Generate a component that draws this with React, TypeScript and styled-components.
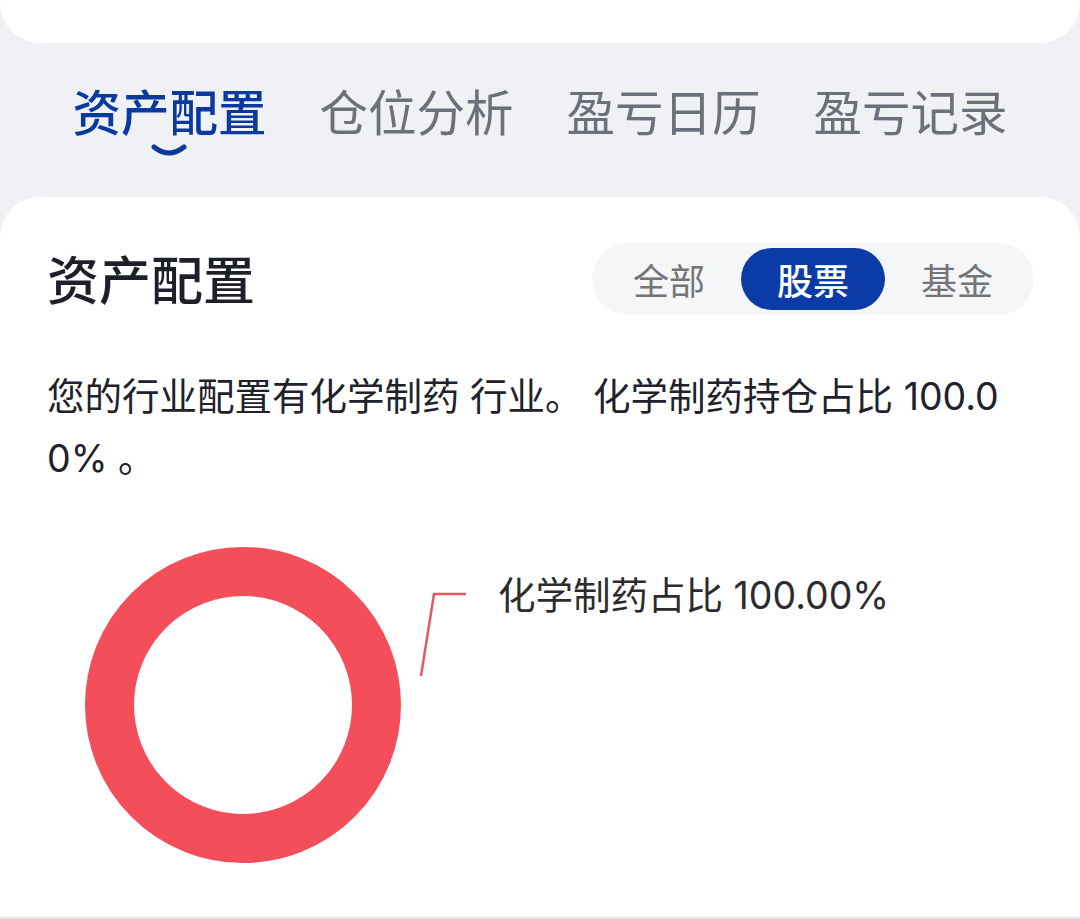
import { styled, createGlobalStyle } from 'styled-components';

const GlobalStyle = createGlobalStyle`
  html, body {
    margin: 0;
    padding: 0;
    background-color: #eff1f5;
  }
  body {
    font-family: "Noto Sans CJK SC", "Noto Sans", sans-serif;
    width: 1080px;
    height: 919px;
    overflow: hidden;
  }
  * {
    box-sizing: border-box;
  }
`;

const Page = styled.div`
  display: flex;
  flex-direction: column;
  height: 919px;
`;

const TopCard = styled.div`
  height: 43px;
  background-color: #ffffff;
  border-radius: 0 0 40px 40px;
`;

const TabBar = styled.nav`
  height: 154px;
  display: flex;
  justify-content: center;
  align-items: flex-start;
  gap: 53px;
  padding-top: 39px;
`;

const Tab = styled.div<{ $active?: boolean }>`
  display: flex;
  flex-direction: column;
  align-items: center;
  font-size: 48.5px;
  line-height: 56px;
  font-weight: ${(p) => (p.$active ? 500 : 400)};
  color: ${(p) => (p.$active ? '#0b3a9f' : '#6d707b')};
  white-space: nowrap;
`;

const Smile = styled.svg`
  margin-top: 6px;
`;

const Card = styled.section`
  flex: 1;
  background-color: #ffffff;
  border-radius: 40px 40px 0 0;
  border-bottom: 2px solid #e3e3e5;
  padding: 46px 46px 0 47px;
`;

const Header = styled.div`
  display: flex;
  justify-content: space-between;
  align-items: center;
  height: 72px;
`;

const Title = styled.h2`
  margin: 0;
  margin-top: -4px;
  font-size: 52px;
  font-weight: 500;
  color: #1d2029;
`;

const Segmented = styled.div`
  display: flex;
  padding: 5px;
  border-radius: 36px;
  background-color: #f5f6f8;
`;

const Segment = styled.button<{ $active?: boolean }>`
  width: 144px;
  height: 62px;
  border: none;
  border-radius: 31px;
  font-family: inherit;
  font-size: 36px;
  font-weight: ${(p) => (p.$active ? 500 : 400)};
  background-color: ${(p) => (p.$active ? '#0a3ba6' : 'transparent')};
  color: ${(p) => (p.$active ? '#ffffff' : '#747476')};
  padding: 0;
`;

const Summary = styled.p`
  margin: 51px 0 0;
  width: 960px;
  font-family: Inter, "Noto Sans CJK SC", sans-serif;
  font-size: 37.5px;
  line-height: 62px;
  color: #1f222a;
  word-break: break-all;
`;

const ChartRow = styled.div`
  display: flex;
  align-items: flex-start;
  margin-top: 52px;
`;

const ChartLabel = styled.div`
  margin-left: 11px;
  margin-top: 26px;
  font-family: Inter, "Noto Sans CJK SC", sans-serif;
  font-size: 37.5px;
  line-height: 56px;
  color: #2c2c2e;
  white-space: nowrap;
`;

const tabs = ['资产配置', '仓位分析', '盈亏日历', '盈亏记录'];
const segments = ['全部', '股票', '基金'];

export default function App() {
  return (
    <Page>
      <GlobalStyle />
      <TopCard />
      <TabBar>
        {tabs.map((t, i) => (
          <Tab key={t} $active={i === 0}>
            {t}
            {i === 0 && (
              <Smile width="36" height="14" viewBox="0 0 36 14">
                <path d="M3 3 Q18 15 33 3" fill="none" stroke="#0b3a9f" strokeWidth="5" strokeLinecap="round" />
              </Smile>
            )}
          </Tab>
        ))}
      </TabBar>
      <Card>
        <Header>
          <Title>资产配置</Title>
          <Segmented>
            {segments.map((s) => (
              <Segment key={s} $active={s === '股票'}>
                {s}
              </Segment>
            ))}
          </Segmented>
        </Header>
        <Summary>您的行业配置有化学制药 行业。 化学制药持仓占比 100.00% 。</Summary>
        <ChartRow>
          <svg width="440" height="330" viewBox="0 0 440 330">
            <circle cx="196" cy="163" r="133.5" fill="none" stroke="#f44e5b" strokeWidth="49" />
            <polyline points="374,134 387,52 419,52" fill="none" stroke="#e15a64" strokeWidth="2.5" />
          </svg>
          <ChartLabel>化学制药占比 100.00%</ChartLabel>
        </ChartRow>
      </Card>
    </Page>
  );
}
